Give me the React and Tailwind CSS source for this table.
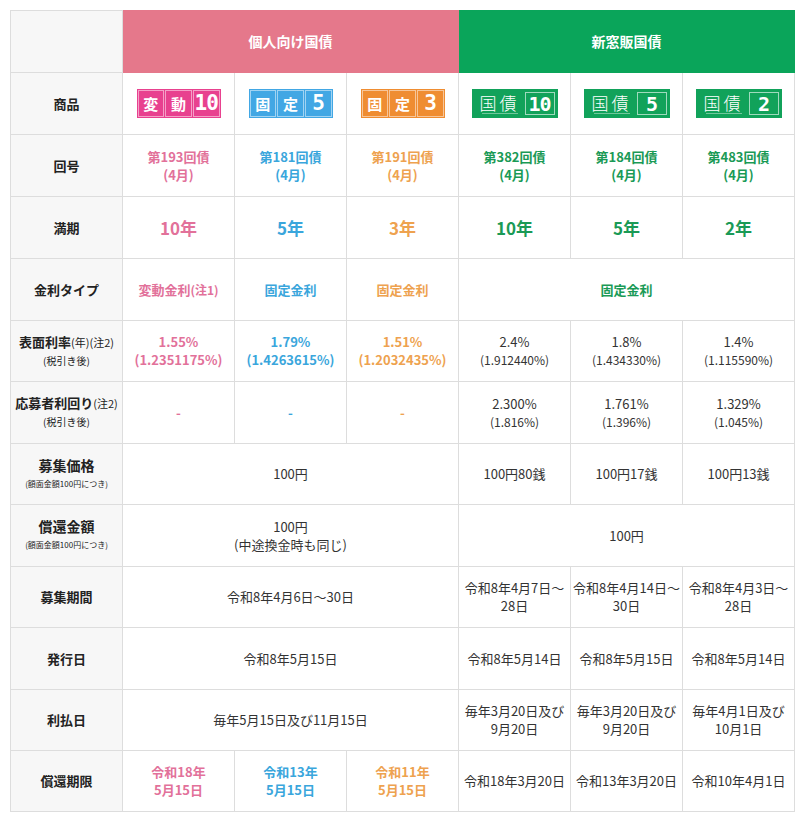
import React from 'react';

const PINK = 'text-[#e2719a]';
const BLUE = 'text-[#3aa6dc]';
const ORANGE = 'text-[#eea24f]';
const GREEN = 'text-[#1a9a56]';

const th = 'bg-[#f7f7f7] border border-[#dddddd] text-center align-middle font-bold text-[13px] text-[#222]';
const cell = 'border border-[#dddddd] text-center align-middle text-[13px] leading-[18px]';
const td = `${cell} text-[#333]`;

const KojinBadge = ({ a, b, num, color }) => (
  <div className={`inline-flex h-[29px] w-[84px] p-[1px] gap-[1px] ${color}`}>
    <div className="flex-1 flex items-center justify-center border border-white/50 text-white text-[15px] font-bold leading-none">{a}</div>
    <div className="flex-1 flex items-center justify-center border border-white/50 text-white text-[15px] font-bold leading-none">{b}</div>
    <div className="flex-1 flex items-center justify-center border border-white/50 text-white text-[21px] font-black leading-none tracking-[-1px] font-['DejaVu_Sans_Mono',monospace]">{num}</div>
  </div>
);

const MadoBadge = ({ num }) => (
  <div className="inline-flex h-[29px] w-[86px] bg-[#11a25a] items-center pl-[8px] pr-[3px] gap-[5px]">
    <div className="flex flex-col items-center">
      <span className="text-white text-[17px] font-light leading-none tracking-[3px]">国債</span>
      <span className="mt-[2px] h-[1px] w-[36px] bg-white/40"></span>
    </div>
    <div className="flex-1 h-[23px] border border-white/60 flex items-center justify-center text-white text-[20px] font-black leading-none tracking-[-1px] font-['DejaVu_Sans_Mono',monospace]">{num}</div>
  </div>
);

export default function App() {
  return (
    <div className="bg-white min-h-[813px] pt-[10px] pl-[10px] font-['Noto_Sans_CJK_JP','Noto_Sans',sans-serif]">
      <table className="table-fixed border-collapse w-[784px]">
        <colgroup>
          {[0, 1, 2, 3, 4, 5, 6].map((i) => (
            <col key={i} className="w-[112px]" />
          ))}
        </colgroup>
        <tbody>
          <tr className="h-[62px]">
            <td className="bg-[#f7f7f7] border border-[#dddddd]"></td>
            <td colSpan={3} className="bg-[#e5788b] text-white font-bold text-[14px] text-center border border-[#e5788b]">個人向け国債</td>
            <td colSpan={3} className="bg-[#0aa55a] text-white font-bold text-[14px] text-center border border-[#0aa55a]">新窓販国債</td>
          </tr>
          <tr className="h-[62px]">
            <td className={th}>商品</td>
            <td className={td}><KojinBadge a="変" b="動" num="10" color="bg-[#e8418f]" /></td>
            <td className={td}><KojinBadge a="固" b="定" num="5" color="bg-[#42a7e4]" /></td>
            <td className={td}><KojinBadge a="固" b="定" num="3" color="bg-[#ef8d32]" /></td>
            <td className={td}><MadoBadge num="10" /></td>
            <td className={td}><MadoBadge num="5" /></td>
            <td className={td}><MadoBadge num="2" /></td>
          </tr>
          <tr className="h-[62px]">
            <td className={th}>回号</td>
            <td className={`${cell} font-bold ${PINK}`}>第193回債<br />(4月)</td>
            <td className={`${cell} font-bold ${BLUE}`}>第181回債<br />(4月)</td>
            <td className={`${cell} font-bold ${ORANGE}`}>第191回債<br />(4月)</td>
            <td className={`${cell} font-bold ${GREEN}`}>第382回債<br />(4月)</td>
            <td className={`${cell} font-bold ${GREEN}`}>第184回債<br />(4月)</td>
            <td className={`${cell} font-bold ${GREEN}`}>第483回債<br />(4月)</td>
          </tr>
          <tr className="h-[62px]">
            <td className={th}>満期</td>
            <td className={`${cell} font-bold text-[17px] ${PINK}`}>10年</td>
            <td className={`${cell} font-bold text-[17px] ${BLUE}`}>5年</td>
            <td className={`${cell} font-bold text-[17px] ${ORANGE}`}>3年</td>
            <td className={`${cell} font-bold text-[17px] ${GREEN}`}>10年</td>
            <td className={`${cell} font-bold text-[17px] ${GREEN}`}>5年</td>
            <td className={`${cell} font-bold text-[17px] ${GREEN}`}>2年</td>
          </tr>
          <tr className="h-[62px]">
            <td className={th}>金利タイプ</td>
            <td className={`${cell} font-bold ${PINK}`}>変動金利<span className="text-[12px]">(注1)</span></td>
            <td className={`${cell} font-bold ${BLUE}`}>固定金利</td>
            <td className={`${cell} font-bold ${ORANGE}`}>固定金利</td>
            <td colSpan={3} className={`${cell} font-bold ${GREEN}`}>固定金利</td>
          </tr>
          <tr className="h-[61px]">
            <td className={`${th} leading-[18px]`}>
              表面利率<span className="font-normal text-[11px]">(年)(注2)</span>
              <br />
              <span className="font-normal text-[10px]">(税引き後)</span>
            </td>
            <td className={`${cell} font-bold ${PINK}`}>1.55%<br />(1.2351175%)</td>
            <td className={`${cell} font-bold ${BLUE}`}>1.79%<br />(1.4263615%)</td>
            <td className={`${cell} font-bold ${ORANGE}`}>1.51%<br />(1.2032435%)</td>
            <td className={td}>2.4%<br /><span className="text-[12px]">(1.912440%)</span></td>
            <td className={td}>1.8%<br /><span className="text-[12px]">(1.434330%)</span></td>
            <td className={td}>1.4%<br /><span className="text-[12px]">(1.115590%)</span></td>
          </tr>
          <tr className="h-[62px]">
            <td className={`${th} leading-[18px]`}>
              応募者利回り<span className="font-normal text-[11px]">(注2)</span>
              <br />
              <span className="font-normal text-[10px]">(税引き後)</span>
            </td>
            <td className={`${cell} font-bold ${PINK}`}>-</td>
            <td className={`${cell} font-bold ${BLUE}`}>-</td>
            <td className={`${cell} font-bold ${ORANGE}`}>-</td>
            <td className={td}>2.300%<br /><span className="text-[12px]">(1.816%)</span></td>
            <td className={td}>1.761%<br /><span className="text-[12px]">(1.396%)</span></td>
            <td className={td}>1.329%<br /><span className="text-[12px]">(1.045%)</span></td>
          </tr>
          <tr className="h-[61px]">
            <td className={`${th} leading-[16px]`}>
              <span className="text-[14px]">募集価格</span>
              <br />
              <span className="font-normal text-[8px]">(額面金額100円につき)</span>
            </td>
            <td colSpan={3} className={td}>100円</td>
            <td className={td}>100円80銭</td>
            <td className={td}>100円17銭</td>
            <td className={td}>100円13銭</td>
          </tr>
          <tr className="h-[62px]">
            <td className={`${th} leading-[16px]`}>
              <span className="text-[14px]">償還金額</span>
              <br />
              <span className="font-normal text-[8px]">(額面金額100円につき)</span>
            </td>
            <td colSpan={3} className={td}>100円<br />(中途換金時も同じ)</td>
            <td colSpan={3} className={td}>100円</td>
          </tr>
          <tr className="h-[61px]">
            <td className={th}>募集期間</td>
            <td colSpan={3} className={td}>令和8年4月6日～30日</td>
            <td className={td}>令和8年4月7日～<br />28日</td>
            <td className={td}>令和8年4月14日～<br />30日</td>
            <td className={td}>令和8年4月3日～<br />28日</td>
          </tr>
          <tr className="h-[62px]">
            <td className={th}>発行日</td>
            <td colSpan={3} className={td}>令和8年5月15日</td>
            <td className={td}>令和8年5月14日</td>
            <td className={td}>令和8年5月15日</td>
            <td className={td}>令和8年5月14日</td>
          </tr>
          <tr className="h-[61px]">
            <td className={th}>利払日</td>
            <td colSpan={3} className={td}>毎年5月15日及び11月15日</td>
            <td className={td}>毎年3月20日及び<br />9月20日</td>
            <td className={td}>毎年3月20日及び<br />9月20日</td>
            <td className={td}>毎年4月1日及び<br />10月1日</td>
          </tr>
          <tr className="h-[61px]">
            <td className={th}>償還期限</td>
            <td className={`${cell} font-bold ${PINK}`}>令和18年<br />5月15日</td>
            <td className={`${cell} font-bold ${BLUE}`}>令和13年<br />5月15日</td>
            <td className={`${cell} font-bold ${ORANGE}`}>令和11年<br />5月15日</td>
            <td className={td}>令和18年3月20日</td>
            <td className={td}>令和13年3月20日</td>
            <td className={td}>令和10年4月1日</td>
          </tr>
        </tbody>
      </table>
    </div>
  );
}
